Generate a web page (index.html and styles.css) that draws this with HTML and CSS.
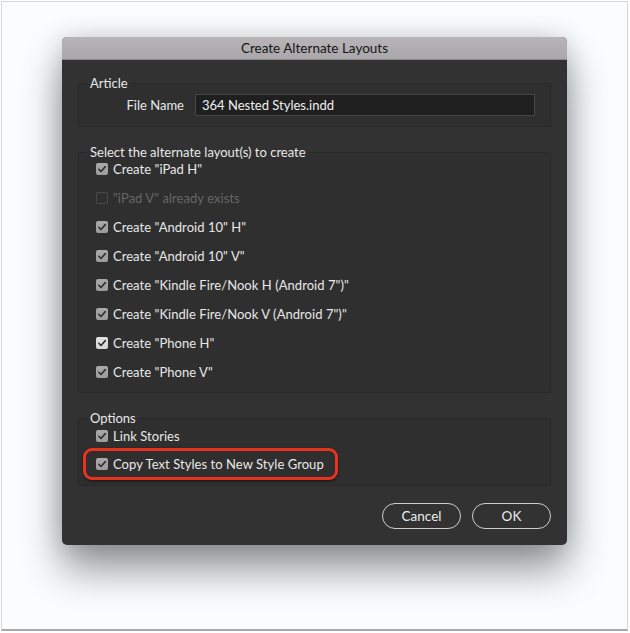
FILE: index.html
```html
<!DOCTYPE html>
<html>
<head>
<meta charset="utf-8">
<link rel="stylesheet" href="styles.css">
</head>
<body>
<div class="frame">
  <div class="dialog">
    <div class="titlebar">Create Alternate Layouts</div>
    <div class="body">
      <fieldset class="group">
        <legend>Article</legend>
        <div class="filerow">
          <span class="flabel">File Name</span>
          <div class="input">364 Nested Styles.indd</div>
        </div>
      </fieldset>

      <fieldset class="group">
        <legend>Select the alternate layout(s) to create</legend>
        <div class="list">
          <div class="row"><span class="cb"><svg viewBox="0 0 12 12"><path d="M2.8 6.3 L5 8.5 L9.3 3.6"/></svg></span>Create "iPad H"</div>
          <div class="row disabled"><span class="cb off"></span>"iPad V" already exists</div>
          <div class="row"><span class="cb"><svg viewBox="0 0 12 12"><path d="M2.8 6.3 L5 8.5 L9.3 3.6"/></svg></span>Create "Android 10" H"</div>
          <div class="row"><span class="cb"><svg viewBox="0 0 12 12"><path d="M2.8 6.3 L5 8.5 L9.3 3.6"/></svg></span>Create "Android 10" V"</div>
          <div class="row"><span class="cb"><svg viewBox="0 0 12 12"><path d="M2.8 6.3 L5 8.5 L9.3 3.6"/></svg></span>Create "Kindle Fire/Nook H (Android 7")"</div>
          <div class="row"><span class="cb"><svg viewBox="0 0 12 12"><path d="M2.8 6.3 L5 8.5 L9.3 3.6"/></svg></span>Create "Kindle Fire/Nook V (Android 7")"</div>
          <div class="row"><span class="cb bright"><svg viewBox="0 0 12 12"><path d="M2.8 6.3 L5 8.5 L9.3 3.6"/></svg></span>Create "Phone H"</div>
          <div class="row"><span class="cb"><svg viewBox="0 0 12 12"><path d="M2.8 6.3 L5 8.5 L9.3 3.6"/></svg></span>Create "Phone V"</div>
        </div>
      </fieldset>

      <fieldset class="group">
        <legend>Options</legend>
        <div class="list opts">
          <div class="row"><span class="cb"><svg viewBox="0 0 12 12"><path d="M2.8 6.3 L5 8.5 L9.3 3.6"/></svg></span>Link Stories</div>
          <div class="row highlight"><span class="cb"><svg viewBox="0 0 12 12"><path d="M2.8 6.3 L5 8.5 L9.3 3.6"/></svg></span>Copy Text Styles to New Style Group</div>
        </div>
      </fieldset>

      <div class="buttons">
        <button class="btn">Cancel</button>
        <button class="btn">OK</button>
      </div>
    </div>
  </div>
</div>
</body>
</html>
```

FILE: styles.css
```css
html, body {
  margin: 0;
  padding: 0;
  background: #ffffff;
}
.frame {
  margin: 1px;
  width: 627px;
  height: 630px;
  box-sizing: border-box;
  border: 1px solid #d6d6d6;
  border-bottom: 2px solid #a8a8a8;
  padding: 35px 0 0 60px;
  background: #fbfcfd;
  font-family: Lato, "Liberation Sans", sans-serif;
}
.dialog {
  width: 505px;
  height: 508px;
  border-radius: 5px;
  background: #323232;
  overflow: hidden;
  box-shadow: 0 24px 40px rgba(0, 0, 0, 0.42), 0 0 26px rgba(0, 0, 0, 0.14);
  display: flex;
  flex-direction: column;
}
.titlebar {
  height: 22px;
  line-height: 23px;
  text-align: center;
  font-size: 13.5px;
  color: #151515;
  background: linear-gradient(#b7b5b7, #a9a7a9);
  border-bottom: 1px solid #888688;
}
.body {
  padding: 16px 16px 16px 16px;
  display: flex;
  flex-direction: column;
}
.group {
  margin: 0 0 18px 0;
  min-width: 0;
  border: 1px solid #282828;
  border-radius: 3px;
  padding: 0 15px 10px 8px;
  background: #2f2f2f;
}
.group legend {
  padding: 0 3px;
  font-size: 13px;
  line-height: 14px;
  color: #e8e8e8;
}
.filerow {
  display: flex;
  justify-content: flex-end;
  align-items: center;
  gap: 11px;
  padding-top: 4px;
}
.flabel {
  font-size: 13px;
  color: #e8e8e8;
}
.input {
  width: 340px;
  height: 22px;
  box-sizing: border-box;
  border: 1px solid #454545;
  background: #1f1f1f;
  color: #f0f0f0;
  font-size: 13px;
  line-height: 20px;
  padding-left: 6px;
}
.list {
  display: flex;
  flex-direction: column;
  gap: 9px;
  padding-left: 9px;
}
.list.opts {
  padding-top: 1px;
  padding-bottom: 1px;
}
.row {
  height: 20px;
  display: flex;
  align-items: center;
  gap: 5px;
  font-size: 13px;
  letter-spacing: 0.05px;
  color: #e8e8e8;
  white-space: nowrap;
}
.row.disabled {
  color: #666666;
}
.cb {
  width: 12px;
  height: 12px;
  box-sizing: border-box;
  border-radius: 2px;
  background: linear-gradient(#a9a9a9, #9c9c9c);
  flex: none;
  display: flex;
}
.cb svg {
  width: 12px;
  height: 12px;
}
.cb path {
  fill: none;
  stroke: #2f2f2f;
  stroke-width: 1.6;
  stroke-linecap: round;
  stroke-linejoin: round;
}
.cb.bright {
  background: linear-gradient(#e2e2e2, #d6d6d6);
}
.cb.off {
  background: transparent;
  border: 1px solid #4a4a4a;
}
.row.highlight {
  align-self: flex-start;
  margin: -7px 0 -6px -13px;
  padding: 3px 11px 3px 10px;
  border: 3px solid #e8331f;
  border-radius: 9px;
  box-shadow: 0 1px 3px rgba(0, 0, 0, 0.6);
}
.buttons {
  display: flex;
  justify-content: flex-end;
  gap: 11px;
  margin-top: -1px;
}
.btn {
  width: 79px;
  height: 26px;
  box-sizing: border-box;
  border: 1.5px solid #cfcfcf;
  border-radius: 13px;
  background: #323232;
  color: #ececec;
  font-family: Lato, "Liberation Sans", sans-serif;
  font-size: 13.5px;
  padding: 0;
}
```
